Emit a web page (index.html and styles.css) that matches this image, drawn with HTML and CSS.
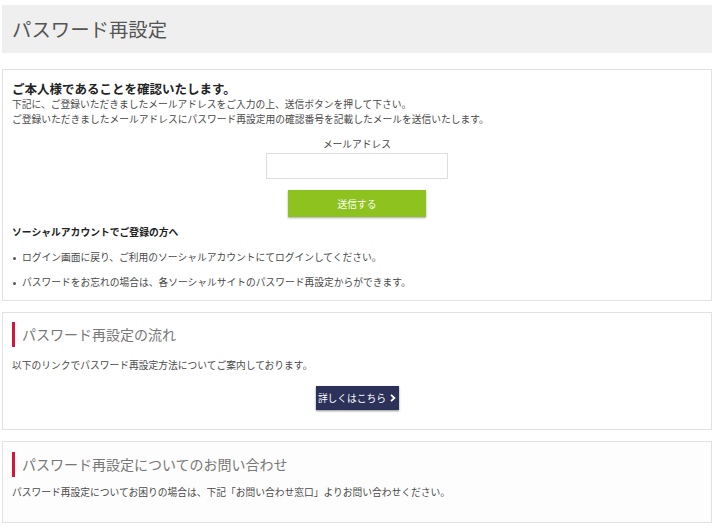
FILE: index.html
```html
<!DOCTYPE html>
<html lang="ja">

<head>
    <meta charset="UTF-8">
    <title>パスワード再設定</title>
    <link rel="stylesheet" href="styles.css">
</head>

<body>
    <div class="page">
        <header class="page-head">
            <h1>パスワード再設定</h1>
        </header>

        <section class="card card-confirm">
            <h2 class="lead">ご本人様であることを確認いたします。</h2>
            <p class="line">下記に、ご登録いただきましたメールアドレスをご入力の上、送信ボタンを押して下さい。</p>
            <p class="line">ご登録いただきましたメールアドレスにパスワード再設定用の確認番号を記載したメールを送信いたします。</p>

            <form class="mail-form" onsubmit="return false">
                <label for="mail">メールアドレス</label>
                <input type="text" id="mail">
                <button class="btn-send">送信する</button>
            </form>

            <h3 class="social-title">ソーシャルアカウントでご登録の方へ</h3>
            <ul class="notes">
                <li>ログイン画面に戻り、ご利用のソーシャルアカウントにてログインしてください。</li>
                <li>パスワードをお忘れの場合は、各ソーシャルサイトのパスワード再設定からができます。</li>
            </ul>
        </section>

        <section class="card card-flow">
            <h2 class="sec-title">パスワード再設定の流れ</h2>
            <p class="line text">以下のリンクでパスワード再設定方法についてご案内しております。</p>
            <div class="more">
                <a class="btn-more" href="#">詳しくはこちら
                    <svg width="6" height="8" viewBox="0 0 6 8"><path d="M1 0.8 L4.4 4 L1 7.2" fill="none" stroke="#fff" stroke-width="1.8"/></svg>
                </a>
            </div>
        </section>

        <section class="card card-contact">
            <h2 class="sec-title">パスワード再設定についてのお問い合わせ</h2>
            <p class="line text">パスワード再設定についてお困りの場合は、下記「お問い合わせ窓口」よりお問い合わせください。</p>
        </section>
    </div>
</body>

</html>
```

FILE: styles.css
```css
body {
    margin: 0;
    background-color: #fff;
    font-family: "Noto Sans CJK JP", "Noto Sans", sans-serif;
    font-size: 9.75px;
    color: #4a4a4a;
}

.page {
    width: 710px;
    margin-left: 2px;
    padding-top: 5px;
}

.page-head {
    background-color: #efefef;
    height: 48px;
    display: flex;
    align-items: center;
    padding-left: 10px;
}

.page-head h1 {
    margin: 0;
    font-size: 19.4px;
    font-weight: 400;
    color: #555;
    line-height: 24px;
}

.card {
    border: 1px solid #e2e2e2;
    padding: 0 9px;
    margin-top: 11px;
}

.card-confirm {
    margin-top: 16px;
    padding-top: 10px;
    padding-bottom: 10px;
}

.line {
    margin: 0;
    line-height: 15px;
}

.lead {
    margin: 0;
    font-size: 12.5px;
    line-height: 17px;
    color: #222;
}

.mail-form {
    display: flex;
    flex-direction: column;
    align-items: center;
    margin-top: 10px;
}

.mail-form label {
    line-height: 15px;
    color: #444;
}

.mail-form input {
    box-sizing: border-box;
    width: 182px;
    height: 26px;
    margin-top: 1px;
    border: 1px solid #dedede;
    background-color: #fff;
}

.btn-send {
    width: 138px;
    height: 27px;
    margin-top: 11px;
    border: 0;
    background-color: #8dc21f;
    color: #fff;
    font-family: inherit;
    font-size: 9.75px;
    box-shadow: 0 1px 2px rgba(0, 0, 0, .35);
}

.social-title {
    margin: 8px 0 0;
    font-size: 9.8px;
    line-height: 15px;
    color: #222;
}

.notes {
    list-style: none;
    margin: 0;
    padding: 0;
}

.notes li {
    margin-top: 10px;
    line-height: 15px;
    padding-left: 10px;
    position: relative;
}

.notes li::before {
    content: "";
    position: absolute;
    left: 1px;
    top: 7px;
    width: 3px;
    height: 3px;
    border-radius: 50%;
    background-color: #555;
}

.sec-title {
    margin: 9px 0 0;
    border-left: 3px solid #d5153c;
    padding-left: 7px;
    height: 25px;
    line-height: 25px;
    font-size: 14px;
    font-weight: 400;
    color: #777;
}

.card-flow {
    padding-bottom: 19px;
}

.card-flow .text {
    margin-top: 11px;
}

.more {
    display: flex;
    justify-content: center;
    margin-top: 13px;
}

.btn-more {
    display: flex;
    align-items: center;
    justify-content: center;
    gap: 4px;
    width: 83px;
    height: 24px;
    background-color: #2b3159;
    color: #fff;
    text-decoration: none;
    box-shadow: 0 1px 2px rgba(0, 0, 0, .45);
}

.card-contact {
    background-color: #fdfdfd;
    padding-bottom: 22px;
}

.card-contact .sec-title {
    margin-top: 10px;
}

.card-contact .text {
    margin-top: 8px;
}
```
